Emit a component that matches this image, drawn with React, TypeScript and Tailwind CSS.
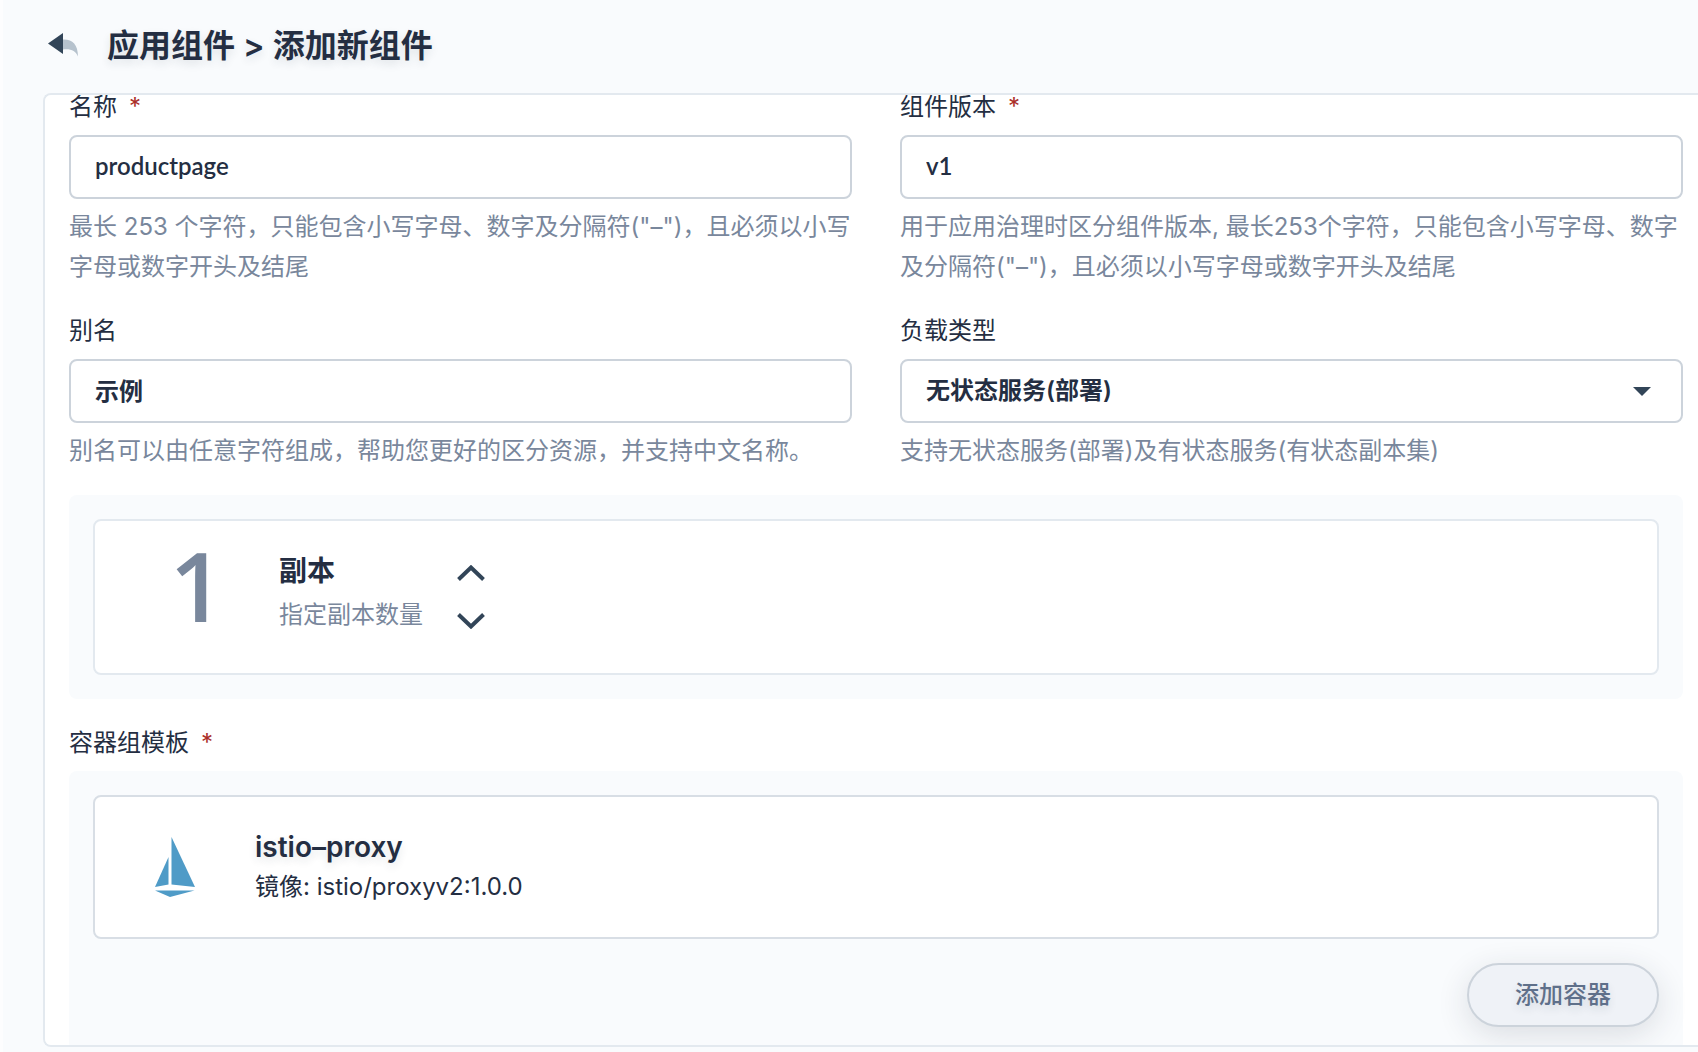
import React, { useState } from 'react';

const controlStyle =
  'mt-4 block h-16 w-full rounded-lg border-2 border-[#ccd3db] bg-white px-6 text-2xl font-semibold text-[#242e42] outline-none focus:border-[#79879c]';
const inputStyle = `${controlStyle} pb-1 font-[Lato,'Noto_Sans_CJK_SC',sans-serif]`;

type FieldProps = {
  id: string;
  label: string;
  required?: boolean;
  hint: string;
  children: React.ReactNode;
};

// label on top, control in the middle, grey help text below
const Field = ({ id, label, required, hint, children }: FieldProps) => (
  <div>
    <label htmlFor={id} className="block text-2xl leading-6">
      {label}
      {required && <span className="ml-3 text-[#ab2f29]">*</span>}
    </label>
    {children}
    <p className="mt-2 text-2xl leading-10 text-[#79879c]">{hint}</p>
  </div>
);

const BackIcon = () => (
  <svg width="32" height="26" viewBox="0 0 32 26" aria-hidden="true">
    <path d="M15 6.500C24 6 30 11 30 23.500C27.500 18 23 15.500 15 16.500Z" fill="#b6c2cd" />
    <path d="M0 10.500L15 0V21Z" fill="#324558" />
  </svg>
);

const IstioLogo = () => (
  <svg width="40" height="60" viewBox="0 0 40 60" className="shrink-0" aria-hidden="true">
    <path d="M16.500 0L40 50L16.500 47.500Z" fill="#4f9bc7" />
    <path d="M13.500 20V47.500L0 50Z" fill="#4f9bc7" />
    <path d="M0 53.500H39.500L15 60Z" fill="#4f9bc7" />
  </svg>
);

const Chevron = ({ up }: { up?: boolean }) => (
  <svg width="28" height="16" viewBox="0 0 28 16" fill="none" aria-hidden="true">
    <path
      d={up ? 'M1.500 14.500L14 2.500L26.500 14.500' : 'M1.500 1.500L14 13.500L26.500 1.500'}
      stroke="#324558"
      strokeWidth="4"
    />
  </svg>
);

const App = () => {
  const [name, setName] = useState('productpage');
  const [version, setVersion] = useState('v1');
  const [alias, setAlias] = useState('示例');
  const [replicas, setReplicas] = useState(1);

  return (
    <div className="flex h-screen flex-col border-l-[3px] border-[#fdfdfe] bg-[#f9fbfd] pb-[5px] pl-10 font-[Inter,'Noto_Sans_CJK_SC',sans-serif] text-[#242e42]">
      <header className="flex h-[93px] shrink-0 items-center gap-[27px] pb-0.5 pl-[5px]">
        <button aria-label="返回">
          <BackIcon />
        </button>
        <h1 className="text-[32px] leading-10 font-semibold [text-shadow:0_4px_8px_rgba(36,46,66,0.12)]">
          应用组件 &gt; 添加新组件
        </h1>
      </header>

      <main className="min-h-0 flex-1 overflow-y-auto rounded-l-lg border-2 border-r-0 border-[#e3e9ef] bg-white pr-[15px] pl-6 [scrollbar-width:none]">
        <div className="grid grid-cols-2 gap-x-12 gap-y-8">
          <Field
            id="name"
            label="名称"
            required
            hint={'最长 253 个字符，只能包含小写字母、数字及分隔符("–")，且必须以小写字母或数字开头及结尾'}
          >
            <input id="name" className={inputStyle} value={name} onChange={(e) => setName(e.target.value)} />
          </Field>
          <Field
            id="version"
            label="组件版本"
            required
            hint={'用于应用治理时区分组件版本, 最长253个字符，只能包含小写字母、数字及分隔符("–")，且必须以小写字母或数字开头及结尾'}
          >
            <input id="version" className={inputStyle} value={version} onChange={(e) => setVersion(e.target.value)} />
          </Field>
          <Field id="alias" label="别名" hint="别名可以由任意字符组成，帮助您更好的区分资源，并支持中文名称。">
            <input id="alias" className={inputStyle} value={alias} onChange={(e) => setAlias(e.target.value)} />
          </Field>
          <Field id="workload" label="负载类型" hint="支持无状态服务(部署)及有状态服务(有状态副本集)">
            <div className="relative">
              <select id="workload" className={`${controlStyle} appearance-none`}>
                <option>无状态服务(部署)</option>
                <option>有状态服务(有状态副本集)</option>
              </select>
              <svg
                className="pointer-events-none absolute top-7 right-8"
                width="18"
                height="9"
                viewBox="0 0 18 9"
                aria-hidden="true"
              >
                <path d="M0 0H18L9 9Z" fill="#324558" />
              </svg>
            </div>
          </Field>
        </div>

        {/* replicas */}
        <section className="mt-6 rounded-lg bg-[#f9fbfd] p-6">
          <div className="flex h-[156px] items-start rounded-lg border-2 border-[#e3e9ef] bg-white pt-6 pl-[66px]">
            <span className="w-[72px] text-center font-['Open_Sans'] text-[96px] leading-20 font-semibold text-[#79879c]">
              {replicas}
            </span>
            <div className="ml-[46px]">
              <h2 className="mt-2 text-[28px] leading-9 font-semibold">副本</h2>
              <p className="mt-1.5 text-2xl leading-10 text-[#79879c]">指定副本数量</p>
            </div>
            <div className="mt-5 ml-[34px] flex flex-col gap-8">
              <button aria-label="增加" onClick={() => setReplicas(replicas + 1)}>
                <Chevron up />
              </button>
              <button aria-label="减少" onClick={() => setReplicas(Math.max(0, replicas - 1))}>
                <Chevron />
              </button>
            </div>
          </div>
        </section>

        {/* pod template */}
        <h2 className="mt-8 text-2xl leading-6">
          容器组模板<span className="ml-3 text-[#ab2f29]">*</span>
        </h2>
        <section className="mt-4 rounded-lg bg-[#f9fbfd] p-6">
          <div className="flex h-36 items-center gap-[60px] rounded-lg border-2 border-[#d8dee5] bg-white pl-[60px]">
            <IstioLogo />
            <div>
              <h3 className="text-[28px] leading-10 font-semibold [text-shadow:0_4px_8px_rgba(36,46,66,0.12)]">
                istio–proxy
              </h3>
              <p className="text-2xl leading-10">镜像: istio/proxyv2:1.0.0</p>
            </div>
          </div>
          <div className="mt-6 flex justify-end">
            <button className="h-16 w-48 rounded-full border-2 border-[#ccd3db] bg-[#eff2f7] text-2xl font-medium text-[#5f708a] shadow-[0_8px_32px_rgba(36,46,66,0.14)] [text-shadow:0_4px_8px_rgba(36,46,66,0.12)]">
              添加容器
            </button>
          </div>
        </section>
      </main>
    </div>
  );
};

export default App;
